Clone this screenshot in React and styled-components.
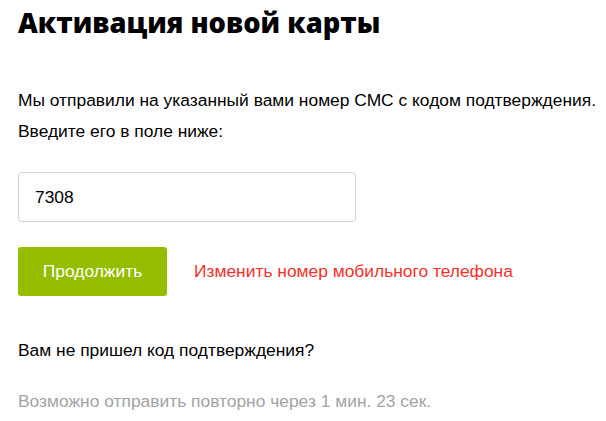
import React from 'react';
import styled, { createGlobalStyle } from 'styled-components';

const GlobalStyle = createGlobalStyle`
  body {
    margin: 0;
    background: #fff;
    font-family: "Liberation Sans", Arial, sans-serif;
    color: #000;
  }
`;

const Page = styled.div`
  padding: 0 0 0 18px;
`;

const Title = styled.h1`
  margin: 0;
  padding-top: 3px;
  font-family: "Open Sans", "Noto Sans", sans-serif;
  font-weight: 800;
  font-size: 27.3px;
  line-height: 40px;
`;

const Text = styled.p`
  margin: ${props => props.top || 0}px 0 0;
  font-size: 17.4px;
  line-height: 31px;
  white-space: nowrap;
  color: ${props => props.muted ? '#a3a3a3' : '#000'};
`;

const CodeInput = styled.input`
  display: block;
  box-sizing: border-box;
  margin-top: 25px;
  width: 338px;
  height: 50px;
  padding: 0 16px;
  border: 1px solid #d2d2d2;
  border-radius: 4px;
  font-family: "Liberation Sans", Arial, sans-serif;
  font-size: 17.4px;
  color: #000;
  outline: none;
`;

const Actions = styled.div`
  display: flex;
  align-items: center;
  gap: 27px;
  margin-top: 25px;
`;

const Button = styled.button`
  width: 149px;
  height: 49px;
  border: 0;
  border-radius: 3px;
  background: #95bd00;
  color: #fff;
  font-family: "Liberation Sans", Arial, sans-serif;
  font-size: 17.4px;
  cursor: pointer;
`;

const Link = styled.a`
  color: #f5302a;
  font-size: 17.4px;
  text-decoration: none;
  white-space: nowrap;
  cursor: pointer;
`;

export default function App() {
  return (
    <Page>
      <GlobalStyle />
      <Title>Активация новой карты</Title>
      <Text top={42}>
        Мы отправили на указанный вами номер СМС с кодом подтверждения.
        <br />
        Введите его в поле ниже:
      </Text>
      <CodeInput defaultValue="7308" />
      <Actions>
        <Button>Продолжить</Button>
        <Link>Изменить номер мобильного телефона</Link>
      </Actions>
      <Text top={39}>Вам не пришел код подтверждения?</Text>
      <Text top={20} muted>Возможно отправить повторно через 1 мин. 23 сек.</Text>
    </Page>
  );
}
